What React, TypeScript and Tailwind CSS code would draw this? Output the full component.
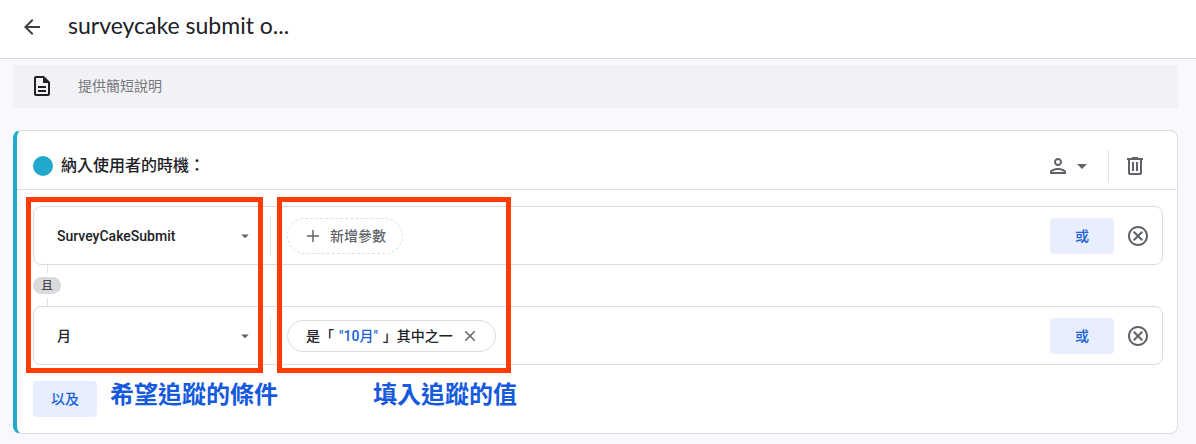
import type { ReactNode } from 'react';

function Icon({ d, className }: { d: string; className: string }) {
  return (
    <svg viewBox="0 0 24 24" fill="currentColor" aria-hidden="true" className={className}>
      <path d={d} />
    </svg>
  );
}

const BACK = 'M20 11H7.83l5.59-5.59L12 4l-8 8 8 8 1.41-1.41L7.83 13H20v-2z';
const DOCUMENT =
  'M8 16h8v2H8v-2zm0-4h8v2H8v-2zm6-10H6c-1.1 0-2 .9-2 2v16c0 1.1.89 2 1.99 2H18c1.1 0 2-.9 2-2V8l-6-6zm4 18H6V4h7v5h5v11z';
const PERSON =
  'M12 12c2.21 0 4-1.79 4-4s-1.79-4-4-4-4 1.790-4 4 1.790 4 4 4zm0-6c1.100 0 2 .9 2 2s-.9 2-2 2-2-.9-2-2 .9-2 2-2zm0 8c-2.670 0-8 1.340-8 4v2h16v-2c0-2.660-5.330-4-8-4zm6 4H6c.220-.720 3.310-2 6-2 2.700 0 5.800 1.290 6 2z';
const TRASH =
  'M15 4V3H9v1H4v2h1v13c0 1.100.9 2 2 2h10c1.100 0 2-.9 2-2V6h1V4h-5zm2 15H7V6h10v13zM9 8h2v9H9V8zm4 0h2v9h-2V8z';
const CARET = 'M7 10l5 5 5-5z';
const PLUS = 'M20 13h-7v7h-2v-7H4v-2h7V4h2v7h7v2z';
const CLOSE =
  'M19 6.410L17.590 5 12 10.590 6.410 5 5 6.410 10.590 12 5 17.590 6.410 19 12 13.410 17.590 19 19 17.590 13.410 12z';
const CANCEL =
  'M12 2C6.470 2 2 6.470 2 12s4.470 10 10 10 10-4.470 10-10S17.530 2 12 2zm0 18c-4.410 0-8-3.590-8-8s3.590-8 8-8 8 3.590 8 8-3.590 8-8 8zm3.590-13L12 10.590 8.410 7 7 8.410 10.590 12 7 15.590 8.410 17 12 13.410 15.590 17 17 15.590 13.410 12 17 8.410z';

function Condition({ label, name, children }: { label: string; name: string; children: ReactNode }) {
  return (
    <div className="flex h-[59px] items-center rounded-lg border border-[#dadce0] pr-3">
      <div className="relative flex w-[236px] shrink-0 items-center">
        <select
          aria-label={name}
          className="h-10 w-full appearance-none bg-transparent pl-[23px] text-sm font-medium text-[#202124]"
        >
          <option>{label}</option>
        </select>
        <Icon d={CARET} className="pointer-events-none absolute right-4 size-[18px] text-[#5f6368]" />
      </div>
      <div className="h-10 w-px bg-[#e4e5e9]" />
      <div className="ml-4 flex flex-1">{children}</div>
      <button className="h-9 w-16 rounded-sm bg-[#e8eefd] text-sm font-medium text-[#1a62d6]">或</button>
      <button aria-label="移除條件" className="ml-3 text-[#5f6368]">
        <Icon d={CANCEL} className="size-6" />
      </button>
    </div>
  );
}

export default function App() {
  return (
    <div className="min-h-screen bg-[#f8f8fd] font-['Roboto','Noto_Sans_CJK_TC',sans-serif] text-[#202124]">
      <header className="flex h-[59px] items-center border-b border-[#dadce0] bg-white pb-2 pl-5">
        <button aria-label="返回" className="text-[#3c4043]">
          <Icon d={BACK} className="mt-1 size-6" />
        </button>
        <h1 className="ml-6 font-['Lato','Noto_Sans_CJK_TC',sans-serif] text-[23px] leading-7">surveycake submit o...</h1>
      </header>

      <main className="pt-[6px] pr-[18px] pb-[10px] pl-[13px]">
        <label className="flex h-[43px] items-center bg-[#f2f1f6] pb-0.5 pl-[17px]">
          <Icon d={DOCUMENT} className="size-6 text-[#202124]" />
          <input
            aria-label="說明"
            placeholder="提供簡短說明"
            className="ml-6 flex-1 bg-transparent text-sm outline-none placeholder:text-[#74777c]"
          />
        </label>

        <section className="mt-[22px] rounded-lg border border-l-4 border-[#dadce0] border-l-[#22a8cb] bg-white">
          <div className="flex h-[59px] items-center border-b border-[#dadce0] pl-4 pt-3 pr-[30px]">
            <span className="size-5 rounded-full bg-[#22a8cb]" />
            <h2 className="ml-2 flex-1 text-base font-medium">納入使用者的時機：</h2>
            <button aria-label="範圍" className="flex items-center text-[#5f6368]">
              <Icon d={PERSON} className="size-6" />
              <Icon d={CARET} className="size-6" />
            </button>
            <div className="ml-[14px] h-8 w-px bg-[#e0e1e6]" />
            <button aria-label="刪除" className="ml-[14px] text-[#5f6368]">
              <Icon d={TRASH} className="size-6" />
            </button>
          </div>

          <div className="relative pt-4 pr-[14px] pb-4 pl-4">
            <Condition label="SurveyCakeSubmit" name="事件">
              <button className="flex h-9 items-center rounded-full border border-dashed border-[#dfe0e4] px-4 text-sm font-medium text-[#5f6368]">
                <Icon d={PLUS} className="size-[18px]" />
                <span className="ml-2">新增參數</span>
              </button>
            </Condition>

            <div className="flex h-[41px] w-7 flex-col items-center">
              <div className="w-px flex-1 bg-[#e0e1e5]" />
              <span className="my-1 flex h-[17px] w-7 items-center justify-center rounded-full bg-[#dadadc] text-xs font-medium text-[#4a4c50]">
                且
              </span>
              <div className="w-px flex-1 bg-[#e0e1e5]" />
            </div>

            <Condition label="月" name="參數">
              <div className="flex h-8 items-center rounded-full border border-[#dadce0] pr-4 pl-[18px] text-sm font-medium">
                <span>
                  是「<span className="mx-[5px] text-[#1a62d6]">"10月"</span>」其中之一
                </span>
                <button aria-label="移除值" className="ml-2 text-[#5f6368]">
                  <Icon d={CLOSE} className="size-[18px]" />
                </button>
              </div>
            </Condition>

            <div className="mt-4 flex h-9">
              <button className="h-full w-16 rounded-sm bg-[#e8eefd] text-sm font-medium text-[#1a62d6]">以及</button>
              <p className="ml-[13px] text-2xl leading-7 font-bold text-[#1559dc]">希望追蹤的條件</p>
              <p className="ml-[95px] text-2xl leading-7 font-bold text-[#1559dc]">填入追蹤的值</p>
            </div>

            <div className="pointer-events-none absolute top-[7px] left-[9px] h-[176px] w-[237px] border-5 border-[#ff3b00]" />
            <div className="pointer-events-none absolute top-[7px] left-[260px] h-[176px] w-[234px] border-5 border-[#ff3b00]" />
          </div>
        </section>
      </main>
    </div>
  );
}
